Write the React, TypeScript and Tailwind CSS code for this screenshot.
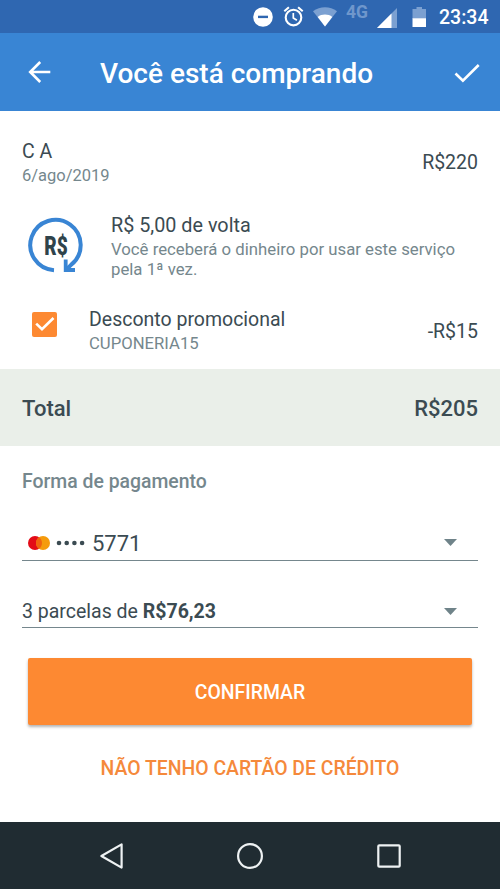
function StatusBar() {
  return (
    <div className="flex h-[33px] items-center bg-[#2f67b1] pl-[253px] text-white">
      <svg className="h-[20px] w-[20px]" viewBox="0 0 20 20">
        <circle cx="10" cy="10" r="9.8" fill="currentColor" />
        <rect x="5" y="8.7" width="10" height="2.4" fill="#2f67b1" />
      </svg>
      <svg
        className="ml-[10px] h-[21px] w-[21px]"
        viewBox="0 0 21 21"
        fill="none"
        stroke="currentColor"
        strokeWidth="2.1"
      >
        <circle cx="10.5" cy="11.6" r="7.8" />
        <path d="M10.3 7v5l3.6 2.3" strokeWidth="1.7" />
        <path d="M1.3 5.2l4.6-3.9M19.7 5.2l-4.6-3.9" />
      </svg>
      <svg className="ml-[9px] h-[20px] w-[24px]" viewBox="0 0 24 20">
        <path d="M0 4.3C7-1 17-1 24 4.3L12 19.6z" fill="#7ba0d1" />
        <path d="M4.7 9.900c4-3.200 10.600-3.200 14.600 0L12 19.600z" fill="currentColor" />
      </svg>
      <span className="mb-[9px] ml-[9px] w-[25px] text-[17.5px] font-bold leading-5 text-[#6f97cc]">4G</span>
      <svg className="ml-[6px] mt-[2px] h-[20px] w-[21px]" viewBox="0 0 21 20">
        <path d="M0 20L20 0v20z" fill="#7ba0d1" />
        <path d="M0 20L14.500 5.500V20z" fill="currentColor" />
      </svg>
      <svg className="ml-[14px] h-[20px] w-[15px]" viewBox="0 0 15 20">
        <path d="M4.500 0h5.500v2H14v10H.500V2h4z" fill="#7ba0d1" />
        <path d="M.500 11.300H14V20H.500z" fill="currentColor" />
      </svg>
      <span className="ml-[12px] mt-[2px] text-[19.5px] font-medium">23:34</span>
    </div>
  )
}

function AppBar() {
  return (
    <header className="flex h-[78px] items-center bg-[#3985d4] pl-[28px] pr-[20px] text-white">
      <svg className="h-[22px] w-[23px]" viewBox="0 0 23 22" fill="none" stroke="currentColor" strokeWidth="2.6">
        <path d="M22.300 11H2.200M12.200 1L2.200 11l10 10" />
      </svg>
      <h1 className="ml-[49px] mt-[3px] flex-1 text-[28px] font-medium leading-8">Você está comprando</h1>
      <svg className="mt-[1px] h-[20px] w-[26px]" viewBox="0 0 26 20" fill="none" stroke="currentColor" strokeWidth="2.6">
        <path d="M1.500 10.500l7.400 7.200L24.700 2" />
      </svg>
    </header>
  )
}

function CashbackIcon() {
  return (
    <svg className="h-[56px] w-[56px]" viewBox="0 0 56 56" fill="none" stroke="#3985d4" strokeWidth="4">
      <path d="M26 53.200A25.200 25.200 0 1 1 43 47.900L38.500 52.400" />
      <path d="M37.700 42.500V53H47" strokeWidth="3.8" />
      <text
        x="16.300"
        y="38"
        fill="#2f434b"
        stroke="none"
        fontSize="25"
        fontWeight="900"
        textLength="23.500"
        lengthAdjust="spacingAndGlyphs"
      >
        R$
      </text>
    </svg>
  )
}

function CardLogo() {
  return (
    <svg className="h-[14px] w-[22px]" viewBox="0 0 22 14">
      <circle cx="7" cy="7" r="7" fill="#e30b17" />
      <circle cx="15" cy="7" r="7" fill="#f59b0b" />
      <path d="M11 1.260a7 7 0 0 1 0 11.480a7 7 0 0 1 0-11.480z" fill="#f0640f" />
    </svg>
  )
}

function SelectArrow() {
  return (
    <svg className="h-[7px] w-[13px]" viewBox="0 0 13 7">
      <path d="M0 0h13L6.500 7z" fill="#6f8389" />
    </svg>
  )
}

export default function App() {
  return (
    <div className="flex h-[889px] w-[500px] flex-col overflow-hidden bg-white font-[Roboto,sans-serif] text-[#3b4b52]">
      <StatusBar />
      <AppBar />

      <main className="flex flex-1 flex-col">
        {/* Serviço */}
        <div className="mt-[29px] flex items-center justify-between px-[22px]">
          <div>
            <p className="text-[19.5px] leading-6">C A</p>
            <p className="text-[16.5px] leading-6 text-[#75878d]">6/ago/2019</p>
          </div>
          <p className="mb-[2px] text-[19.5px]">R$220</p>
        </div>

        {/* Cashback */}
        <div className="mt-[26px] flex pl-[28px]">
          <div className="mt-[3px]">
            <CashbackIcon />
          </div>
          <div className="ml-[27px]">
            <p className="text-[19.8px] leading-6">R$ 5,00 de volta</p>
            <p className="mt-[2px] text-[16.75px] leading-[19.5px] text-[#75878d]">
              Você receberá o dinheiro por usar este serviço
              <br />
              pela 1ª vez.
            </p>
          </div>
        </div>

        {/* Desconto */}
        <div className="mt-[29px] flex items-center pl-[32px] pr-[22px]">
          <div className="mb-[16px] flex h-[25px] w-[25px] items-center justify-center rounded-[2px] bg-[#fd8932]">
            <svg className="h-[16px] w-[20px]" viewBox="0 0 20 16" fill="none" stroke="white" strokeWidth="2.6">
              <path d="M1.200 7.600l5.800 5.700L18.500 2" />
            </svg>
          </div>
          <div className="ml-[32px] flex-1">
            <p className="text-[19.5px] leading-6">Desconto promocional</p>
            <p className="text-[16.7px] leading-6 text-[#75878d]">CUPONERIA15</p>
          </div>
          <p className="text-[19.5px]">-R$15</p>
        </div>

        <div className="mt-[13px] flex h-[77px] items-center justify-between bg-[#eaefe9] px-[22px] pt-[2px] text-[22px] font-medium">
          <span>Total</span>
          <span>R$205</span>
        </div>

        {/* Pagamento */}
        <div className="mt-[24px] px-[22px]">
          <h2 className="text-[19.4px] font-medium leading-6 text-[#75878d]">Forma de pagamento</h2>
          <div className="mt-[31px] flex h-[36px] items-center border-b border-[#75878d] pl-[6px] pr-[21px]">
            <CardLogo />
            <svg className="ml-[6px] h-[6px] w-[30px]" viewBox="0 0 30 6" fill="#3b4b52">
              <circle cx="3" cy="3" r="2.300" />
              <circle cx="10.700" cy="3" r="2.300" />
              <circle cx="18.400" cy="3" r="2.300" />
              <circle cx="26.100" cy="3" r="2.300" />
            </svg>
            <span className="ml-[6px] flex-1 pt-px text-[22px]">5771</span>
            <SelectArrow />
          </div>
          <div className="mt-[35px] flex h-[32px] items-center border-b border-[#75878d] pr-[21px]">
            <span className="flex-1 text-[19.5px]">
              3 parcelas de <b className="font-bold">R$76,23</b>
            </span>
            <SelectArrow />
          </div>
        </div>

        <button className="mx-[28px] mt-[30px] h-[67px] rounded-[2px] bg-[#fd8932] pt-[2px] text-[19.4px] font-medium text-white shadow-[0_2px_3px_rgba(0,0,0,0.3)]">
          CONFIRMAR
        </button>
        <button className="mt-[32px] text-[19.4px] font-medium leading-6 text-[#f5893b]">
          NÃO TENHO CARTÃO DE CRÉDITO
        </button>
      </main>

      {/* Barra de navegação do Android */}
      <nav className="flex h-[67px] items-center bg-[#202c32] pl-[100px] text-[#eef2f3]">
        <svg className="h-[26px] w-[23px]" viewBox="0 0 23 26" fill="none" stroke="currentColor" strokeWidth="2.200">
          <path d="M21.600 1.400v23.200L1.400 13z" strokeLinejoin="round" />
        </svg>
        <svg className="ml-[114px] h-[26px] w-[26px]" viewBox="0 0 26 26" fill="none" stroke="currentColor" strokeWidth="2.200">
          <circle cx="13" cy="13" r="11.900" />
        </svg>
        <svg className="ml-[114px] h-[24px] w-[24px]" viewBox="0 0 24 24" fill="none" stroke="currentColor" strokeWidth="2.200">
          <rect x="1.300" y="1.300" width="21.400" height="21.400" rx="1" />
        </svg>
      </nav>
    </div>
  )
}
